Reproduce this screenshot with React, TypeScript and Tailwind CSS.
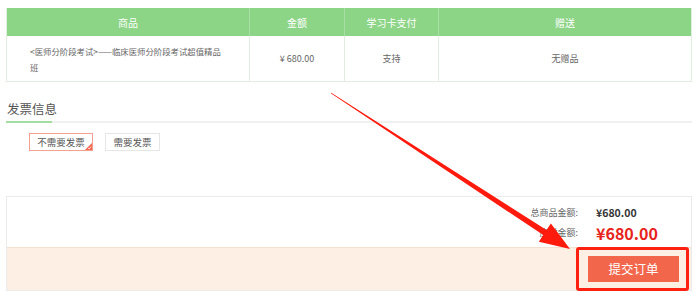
import React from "react";

const font = { fontFamily: '"Microsoft YaHei", "Noto Sans CJK SC", "Liberation Sans", sans-serif' };

export default function App() {
  // arrow geometry
  const sx = 331, sy = 93, tx = 570, ty = 249;
  const dx = tx - sx, dy = ty - sy;
  const len = Math.hypot(dx, dy);
  const ux = dx / len, uy = dy / len;
  const px = -uy, py = ux;
  const hl = 30, hw = 11, sw = 3;
  const bx = tx - ux * hl, by = ty - uy * hl;
  const pts = [
    [sx + px * 0.4, sy + py * 0.4],
    [bx + px * sw, by + py * sw],
    [bx + px * hw, by + py * hw],
    [tx, ty],
    [bx - px * hw, by - py * hw],
    [bx - px * sw, by - py * sw],
    [sx - px * 0.4, sy - py * 0.4],
  ]
    .map((p) => p.join(","))
    .join(" ");

  return (
    <div className="relative w-[700px] h-[299px] bg-white overflow-hidden" style={font}>
      <div className="pt-[8px] pl-[6px] w-[692px]">
        {/* table */}
        <div className="border border-[#e2ede2] border-t-0">
          <div className="flex h-[28px] bg-[#8cd486] text-white text-[10px] items-center">
            <div className="w-[242px] text-center">商品</div>
            <div className="w-[95px] h-full flex items-center justify-center border-l border-[#a9dfa4]">金额</div>
            <div className="w-[94px] h-full flex items-center justify-center border-l border-[#a9dfa4]">学习卡支付</div>
            <div className="flex-1 h-full flex items-center justify-center border-l border-[#a9dfa4]">赠送</div>
          </div>
          <div className="flex h-[45px] text-[9px] text-[#666]">
            <div className="w-[242px] pl-[23px] flex items-center leading-[16px]">
              <span className="w-[196px] text-[8.4px]">&lt;医师分阶段考试&gt;——临床医师分阶段考试超值精品班</span>
            </div>
            <div className="w-[95px] flex items-center justify-center border-l border-[#e2ede2]">¥ 680.00</div>
            <div className="w-[94px] flex items-center justify-center border-l border-[#e2ede2]">支持</div>
            <div className="flex-1 flex items-center justify-center border-l border-[#e2ede2]">无赠品</div>
          </div>
        </div>

        {/* invoice */}
        <div className="mt-[18px]">
          <div className="text-[12.5px] text-[#555] leading-[18px] pl-[1px]">发票信息</div>
          <div className="flex h-[2px] mt-[3px]">
            <div className="w-[46px] bg-[#a5dc9f]" />
            <div className="flex-1 bg-[#f0f0f0]" />
          </div>
          <div className="flex gap-[12px] pl-[23px] mt-[10px]">
            <div className="relative w-[64px] h-[18px] border border-[#f5a090] text-[9.5px] text-[#555] flex items-center justify-center">
              不需要发票
              <svg className="absolute right-0 bottom-0" width="7" height="7" viewBox="0 0 7 7">
                <polygon points="7,0 7,7 0,7" fill="#f4624a" />
                <polyline points="3,5 4.3,6 6,3.5" fill="none" stroke="#fff" strokeWidth="0.8" />
              </svg>
            </div>
            <div className="w-[55px] h-[18px] border border-[#e6e6e6] text-[9.5px] text-[#555] flex items-center justify-center">
              需要发票
            </div>
          </div>
        </div>

        {/* summary */}
        <div className="mt-[45px] border border-[#ebebeb]">
          <div className="h-[50px] bg-white flex flex-col items-end pt-[9px]">
            <div className="flex items-center h-[14px]">
              <span className="text-[9px] text-[#666] text-right pr-[18px]">总商品金额:</span>
              <span className="text-[10.5px] font-bold text-[#333] w-[95px]">¥680.00</span>
            </div>
            <div className="flex items-center h-[24px] mt-[1px]">
              <span className="text-[9px] text-[#666] text-right pr-[18px]">应付金额:</span>
              <span className="text-[16px] font-bold text-[#e8231b] w-[95px] whitespace-nowrap">¥680.00</span>
            </div>
          </div>
          <div className="h-[43px] bg-[#fdefe3] border-t border-[#f4e0d2] flex items-center justify-end pr-[12px]">
            <div className="w-[91px] h-[26px] bg-[#f2664c] text-white text-[12.5px] flex items-center justify-center">
              提交订单
            </div>
          </div>
        </div>
      </div>

      {/* annotation box */}
      <div className="absolute left-[576px] top-[247px] w-[113px] h-[44px] border-[3px] border-[#fe2010] rounded-[3px]" />

      {/* arrow */}
      <svg className="absolute left-0 top-0 pointer-events-none" width="700" height="299">
        <polygon points={pts} fill="#fe1a0c" />
      </svg>
    </div>
  );
}
